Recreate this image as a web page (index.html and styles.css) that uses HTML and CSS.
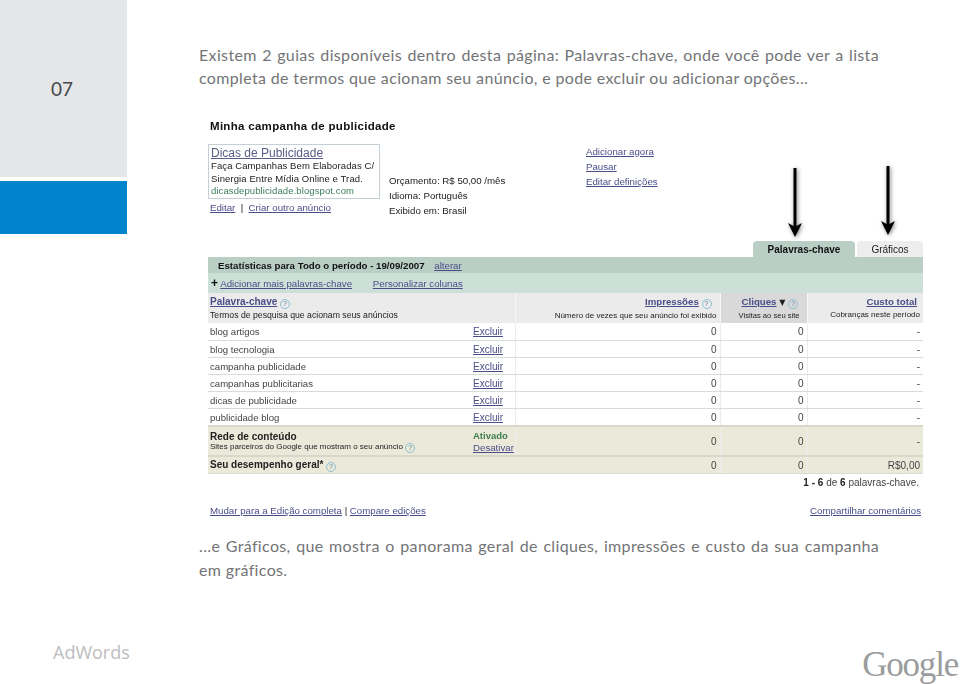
FILE: index.html
```html
<!DOCTYPE html>
<html lang="pt-BR">
<head>
    <meta charset="UTF-8">
    <title>AdWords 07</title>
    <link rel="stylesheet" href="styles.css">
</head>
<body>
    <div class="page">
        <aside class="sidebar">
            <div class="sidebar-num">07</div>
            <div class="sidebar-blue"></div>
        </aside>
        <main class="content">
            <p class="lead">Existem 2 guias disponíveis dentro desta página: Palavras-chave, onde você pode ver a lista completa de termos que acionam seu anúncio, e pode excluir ou adicionar opções...</p>

            <div class="shot">
                <h2 class="camp-title">Minha campanha de publicidade</h2>
                <div class="camp-info">
                    <div class="camp-ad">
                        <div class="ad-box">
                            <a class="ad-title">Dicas de Publicidade</a>
                            <div>Faça Campanhas Bem Elaboradas C/</div>
                            <div>Sinergia Entre Mídia Online e Trad.</div>
                            <div class="ad-url">dicasdepublicidade.blogspot.com</div>
                        </div>
                        <div class="ad-links"><a>Editar</a> &nbsp;|&nbsp; <a>Criar outro anúncio</a></div>
                    </div>
                    <div class="camp-budget">
                        <div>Orçamento: R$ 50,00 /mês</div>
                        <div>Idioma: Português</div>
                        <div>Exibido em: Brasil</div>
                    </div>
                    <div class="camp-actions">
                        <a>Adicionar agora</a>
                        <a>Pausar</a>
                        <a>Editar definições</a>
                    </div>
                </div>

                <svg class="arrow arrow-1" width="20" height="74" viewBox="0 0 20 74"><path d="M8.500 1h3v58l5.500-3-7 14-7-14 5.500 3z"/></svg>
                <svg class="arrow arrow-2" width="20" height="74" viewBox="0 0 20 74"><path d="M8.500 1h3v58l5.500-3-7 14-7-14 5.500 3z"/></svg>

                <div class="tabs">
                    <div class="tab tab-active">Palavras-chave</div>
                    <div class="tab">Gráficos</div>
                </div>
                <div class="stats-bar"><b>Estatísticas para Todo o período - 19/09/2007</b> <a>alterar</a></div>
                <div class="add-bar"><b>+</b> <a>Adicionar mais palavras-chave</a> <a class="add-cols">Personalizar colunas</a></div>

                <table class="kw-table">
                    <colgroup>
                        <col class="c-kw"><col class="c-act"><col class="c-imp"><col class="c-clk"><col class="c-cost">
                    </colgroup>
                    <thead>
                        <tr>
                            <th colspan="2" class="left"><a>Palavra-chave</a> <span class="help">?</span><small>Termos de pesquisa que acionam seus anúncios</small></th>
                            <th class="imp"><span class="head"><a>Impressões</a> <span class="help">?</span></span><small>Número de vezes que seu anúncio foi exibido</small></th>
                            <th class="sorted"><a>Cliques</a> <span class="sort">▼</span> <span class="help">?</span><small>Visitas ao seu site</small></th>
                            <th class="cost"><span class="head"><a>Custo total</a></span><small>Cobranças neste período</small></th>
                        </tr>
                    </thead>
                    <tbody>
                        <tr><td>blog artigos</td><td><a>Excluir</a></td><td class="num">0</td><td class="num">0</td><td class="num">-</td></tr>
                        <tr><td>blog tecnologia</td><td><a>Excluir</a></td><td class="num">0</td><td class="num">0</td><td class="num">-</td></tr>
                        <tr><td>campanha publicidade</td><td><a>Excluir</a></td><td class="num">0</td><td class="num">0</td><td class="num">-</td></tr>
                        <tr><td>campanhas publicitarias</td><td><a>Excluir</a></td><td class="num">0</td><td class="num">0</td><td class="num">-</td></tr>
                        <tr><td>dicas de publicidade</td><td><a>Excluir</a></td><td class="num">0</td><td class="num">0</td><td class="num">-</td></tr>
                        <tr><td>publicidade blog</td><td><a>Excluir</a></td><td class="num">0</td><td class="num">0</td><td class="num">-</td></tr>
                        <tr class="row-net">
                            <td><b>Rede de conteúdo</b><small>Sites parceiros do Google que mostram o seu anúncio <span class="help">?</span></small></td>
                            <td><b class="on">Ativado</b><a class="off">Desativar</a></td>
                            <td class="num">0</td><td class="num">0</td><td class="num">-</td>
                        </tr>
                        <tr class="row-total">
                            <td colspan="2"><b>Seu desempenho geral*</b> <span class="help">?</span></td>
                            <td class="num">0</td><td class="num">0</td><td class="num">R$0,00</td>
                        </tr>
                    </tbody>
                </table>
                <div class="pager"><b>1 - 6</b> de <b>6</b> palavras-chave.</div>
                <div class="shot-foot">
                    <div><a>Mudar para a Edição completa</a> | <a>Compare edições</a></div>
                    <a>Compartilhar comentários</a>
                </div>
            </div>

            <p class="lead lead-2">...e Gráficos, que mostra o panorama geral de cliques, impressões e custo da sua campanha em gráficos.</p>
        </main>
    </div>
    <footer class="footer">
        <div class="product">AdWords</div>
        <div class="logo">Google</div>
    </footer>
</body>
</html>
```

FILE: styles.css
```css
html, body {
    margin: 0;
    background: #fff;
}
body {
    width: 960px;
    height: 684px;
    overflow: hidden;
    font-family: "Liberation Sans", Arial, sans-serif;
}
a {
    color: #4b4d88;
    text-decoration: underline;
}
.page {
    display: flex;
    height: 636px;
}
.sidebar {
    width: 127px;
    flex: none;
}
.sidebar-num {
    height: 177px;
    box-sizing: border-box;
    padding: 77px 0 0 51px;
    background: #e5e6e8;
    color: #46474a;
    font: 19px/24px Lato, sans-serif;
}
.sidebar-blue {
    height: 53px;
    margin-top: 4px;
    background: #0084cb;
}
.content {
    width: 761px;
    padding: 43px 0 0 72px;
}
.lead {
    width: 680px;
    margin: 0;
    color: #737476;
    font: 16px/23px Lato, sans-serif;
    letter-spacing: 0.35px;
    text-align: justify;
}
.lead-2 {
    margin-top: 17px;
    line-height: 24px;
}

/* captured adwords panel */
.shot {
    position: relative;
    width: 715px;
    margin: 29px 0 0 9px;
    color: #222;
    font-size: 9.700px;
    filter: blur(0.4px);
}
.camp-title {
    margin: 0 0 0 2px;
    height: 26px;
    color: #111;
    font-size: 11.500px;
    line-height: 16px;
    letter-spacing: 0.3px;
}
.camp-info {
    display: flex;
    height: 97px;
}
.camp-ad {
    width: 181px;
    flex: none;
}
.ad-box {
    box-sizing: border-box;
    width: 172px;
    height: 55px;
    padding: 2px 0 0 2px;
    border: 1px solid #c5d0d6;
    font-size: 9.500px;
    line-height: 12.500px;
    letter-spacing: 0.1px;
}
.ad-title {
    display: block;
    color: #5c5c88;
    font-size: 12px;
    line-height: 13px;
    letter-spacing: 0;
}
.ad-url {
    color: #3c7c5c;
}
.ad-links {
    margin: 2px 0 0 2px;
    line-height: 13px;
}
.camp-budget {
    width: 197px;
    flex: none;
    padding-top: 29px;
    line-height: 15px;
}
.camp-actions {
    display: flex;
    flex-direction: column;
    align-items: flex-start;
    padding-top: 1px;
    line-height: 14.800px;
}
.arrow {
    position: absolute;
    filter: drop-shadow(1px 1px 2px rgba(0, 0, 0, 0.5));
}
.arrow-1 {
    left: 577px;
    top: 49px;
}
.arrow-2 {
    left: 670px;
    top: 47px;
}
.tabs {
    display: flex;
    justify-content: flex-end;
    gap: 2px;
    height: 16px;
    font-size: 10px;
}
.tab {
    width: 66px;
    height: 16px;
    box-sizing: border-box;
    padding-top: 3px;
    background: #ededed;
    border-radius: 4px 4px 0 0;
    text-align: center;
    line-height: 12px;
}
.tab-active {
    width: 102px;
    background: #b9cfc5;
    color: #111;
    font-weight: bold;
}
.stats-bar {
    height: 16px;
    padding-left: 10px;
    background: #b9cfc5;
    line-height: 17px;
}
.stats-bar a {
    margin-left: 7px;
}
.stats-bar b {
    color: #111;
}
.add-bar {
    height: 20px;
    padding-left: 3px;
    background: #cde0d8;
    line-height: 20px;
}
.add-bar b {
    font-size: 12px;
    color: #111;
}
.add-cols {
    margin-left: 18px;
}
.kw-table {
    width: 715px;
    table-layout: fixed;
    border-collapse: collapse;
}
.c-kw { width: 262px; }
.c-act { width: 45px; }
.c-imp { width: 205px; }
.c-clk { width: 87px; }
.c-cost { width: 116px; }
.kw-table th {
    height: 30px;
    padding: 3px 3px 0 3px;
    box-sizing: border-box;
    background: #ebebeb;
    vertical-align: top;
    text-align: right;
    line-height: 12px;
    border-left: 1px solid #f6f6f6;
}
.kw-table th.left {
    padding-left: 2px;
    font-size: 10px;
    text-align: left;
    border-left: 0;
}
.kw-table th.sorted {
    padding-left: 21px;
    background: #d9d9d9;
    text-align: left;
}
.head {
    display: block;
}
.imp .head {
    padding-right: 5px;
}
.cost .head {
    padding-right: 3px;
}
.kw-table small {
    display: block;
    margin-top: 1px;
    font-size: 8px;
    font-weight: normal;
    color: #222;
    line-height: 11px;
}
.kw-table th.left small {
    font-size: 8.700px;
}
.kw-table th.sorted small {
    margin-left: -3px;
    font-size: 7.600px;
}
.kw-table .row-net small {
    margin-top: -1px;
    line-height: 10px;
}
.kw-table td {
    height: 17.200px;
    padding: 2px 3px 0 2px;
    box-sizing: border-box;
    border-bottom: 1px solid #d8dcd8;
    color: #444;
    font-size: 9.600px;
    line-height: 12px;
}
.kw-table td:nth-child(2) {
    padding-left: 3px;
}
.kw-table td a {
    font-size: 10px;
}
.kw-table td + td + td {
    border-left: 1px solid #ececec;
}
.kw-table td.num {
    font-size: 10px;
    text-align: right;
}
.row-net td {
    height: 30px;
    background: #ebe9da;
    border-top: 2px solid #d8d8ca;
}
.row-total td {
    height: 17px;
    background: #ebe9da;
    border-top: 2px solid #d8d8ca;
}
.kw-table .row-net b, .kw-table .row-total b {
    color: #222;
    font-size: 10px;
}
.kw-table .row-net .on {
    color: #3c7c4c;
    display: block;
    font-size: 9.500px;
}
.off {
    display: block;
}
.kw-table td .off {
    font-size: 9.700px;
}
.help {
    display: inline-block;
    width: 8px;
    height: 8px;
    border: 1px solid #8fc0d0;
    border-radius: 50%;
    color: #5a8aa0;
    font-size: 7px;
    font-weight: normal;
    line-height: 8px;
    text-align: center;
    vertical-align: -1px;
    letter-spacing: 0;
}
.sort {
    font-size: 8px;
    color: #222;
    font-family: "DejaVu Sans", sans-serif;
}
.pager {
    margin-top: 3px;
    padding-right: 4px;
    font-size: 10px;
    text-align: right;
    line-height: 12px;
    color: #444;
}
.pager b {
    color: #222;
}
.shot-foot {
    display: flex;
    justify-content: space-between;
    margin-top: 15px;
    padding: 0 2px;
    line-height: 13px;
}

.footer {
    display: flex;
    justify-content: space-between;
    align-items: flex-start;
    height: 48px;
    padding: 3px 2px 0 53px;
    box-sizing: border-box;
}
.product {
    color: #bcbdbf;
    font: 18px/26px "Open Sans", sans-serif;
}
.logo {
    margin-top: 8px;
    color: #9a9c9e;
    font: 35px/36px "Liberation Serif", serif;
    letter-spacing: -1.200px;
}
```
